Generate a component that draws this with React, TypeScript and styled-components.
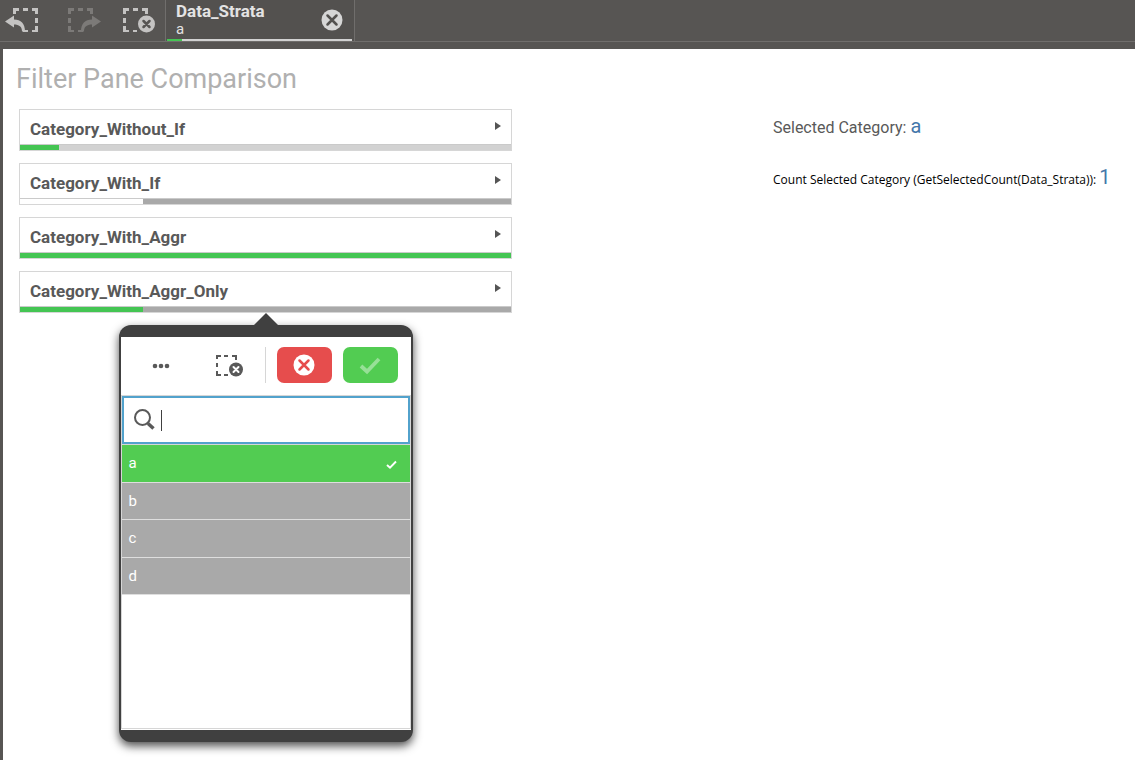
import React from 'react';
import styled, { createGlobalStyle } from 'styled-components';

const GlobalStyle = createGlobalStyle`
  *, *::before, *::after { box-sizing: border-box; }
  body {
    margin: 0;
    background: #575553;
    font-family: Roboto, "Open Sans", "Liberation Sans", sans-serif;
    color: #595959;
  }
  button { font: inherit; border: 0; padding: 0; background: none; cursor: pointer; }
  svg { display: block; }
`;

const Page = styled.div`
  display: flex;
  flex-direction: column;
  min-height: 100vh;
  background: #575553;
`;

const SelectionBar = styled.header`
  display: flex;
  height: 42px;
  margin-bottom: 7px;
  border-bottom: 1px solid #706e6c;
`;

const Tools = styled.nav`
  display: flex;
  align-items: center;
  gap: 20px;
  padding: 0 6px 0 5px;
`;

const ToolButton = styled.button<{ $dim?: boolean }>`
  color: ${(p) => (p.$dim ? '#7c7a78' : '#c4c3c2')};
`;

const Selection = styled.section`
  display: flex;
  flex-direction: column;
  justify-content: space-between;
  width: 190px;
  padding: 0 2px 0 1px;
  border-left: 1px solid #706e6c;
  border-right: 1px solid #706e6c;
  background: #53514f;
`;

const SelectionBody = styled.div`
  display: flex;
  align-items: center;
  justify-content: space-between;
  height: 39px;
  padding: 0 9px;
  color: #e3e3e3;
`;

const SelectionName = styled.div`
  font-size: 17px;
  line-height: 18px;
  font-weight: 700;
`;

const SelectionValue = styled.div`
  font-size: 15px;
  line-height: 18px;
`;

const Sheet = styled.main`
  flex: 1;
  margin-left: 3px;
  padding: 12px 16px 16px;
  background: #fff;
`;

const Title = styled.h1`
  margin: 0 0 12px -3px;
  font-size: 27px;
  line-height: 36px;
  font-weight: 400;
  color: #b0b0b0;
`;

const Columns = styled.div`
  display: grid;
  grid-template-columns: minmax(0, 493fr) minmax(0, 346fr);
  column-gap: 261px;
`;

const Filters = styled.div`
  display: flex;
  flex-direction: column;
  gap: 12px;
`;

const FilterSlot = styled.div`
  position: relative;
`;

const FilterButton = styled.button`
  display: flex;
  flex-direction: column;
  width: 100%;
  height: 42px;
  border: 1px solid #d6d6d6;
  background: #fff;
  text-align: left;
`;

const FilterLabel = styled.span`
  display: flex;
  flex: 1;
  align-items: center;
  justify-content: space-between;
  width: 100%;
  padding: 3px 10px 0 10px;
  font-size: 17px;
  line-height: 20px;
  font-weight: 700;
  color: #595959;

  svg { margin-bottom: 5px; }
`;

const StateBar = styled.span<{ $rule?: boolean }>`
  display: flex;
  width: 100%;
  height: ${(p) => (p.$rule ? 6 : 2)}px;
  border-top: ${(p) => (p.$rule ? '1px solid #cacaca' : '0')};
`;

const StatePart = styled.span<{ $share: number; $color: string }>`
  flex: ${(p) => p.$share} 1 0;
  background: ${(p) => p.$color};
`;

const Popover = styled.section`
  position: absolute;
  z-index: 2;
  top: 54px;
  left: 50%;
  width: 294px;
  transform: translateX(-50%);
  padding: 12px 2px;
  border-radius: 12px;
  background: #404040;
  box-shadow: 0 4px 10px rgba(0, 0, 0, 0.7);
`;

const Pointer = styled.svg`
  position: absolute;
  top: -12px;
  left: 50%;
  transform: translateX(-50%);
  fill: #404040;
`;

const PopoverBody = styled.div`
  padding-bottom: 1px;
  background: #fff;
`;

const ListTools = styled.div`
  display: flex;
  align-items: center;
  height: 58px;
  padding: 0 13px 0 31px;
  color: #595959;
`;

const ListTool = styled.button`
  margin-right: 46px;
  color: inherit;

  & + & { margin-right: 21px; }
`;

const ActionButton = styled.button<{ $color: string }>`
  display: flex;
  align-items: center;
  justify-content: center;
  width: 55px;
  height: 36px;
  margin: 0 0 2px 11px;
  border-radius: 7px;
  background: ${(p) => p.$color};
`;

const Separator = styled.span`
  width: 1px;
  height: 36px;
  margin-bottom: 2px;
  background: #d6d6d6;
`;

const ListFrame = styled.div`
  display: flex;
  flex-direction: column;
  height: 334px;
  border: 1px solid #d6d6d6;
`;

const SearchBox = styled.label`
  display: flex;
  align-items: center;
  height: 48px;
  padding-left: 10px;
  border: 2px solid #52a2cc;
  color: #595959;
`;

const Caret = styled.span`
  width: 1px;
  height: 21px;
  margin-left: 6px;
  background: #404040;
`;

const SearchInput = styled.input`
  flex: 1;
  min-width: 0;
  height: 28px;
  padding: 0 4px;
  border: 0;
  outline: 0;
  background: transparent;
  font: inherit;
`;

const ValueList = styled.ul`
  display: grid;
  grid-auto-rows: 1fr;
  height: 151px;
  margin: 0;
  padding: 0;
  list-style: none;
  border-top: 1px solid #d6d6d6;
`;

const ValueRow = styled.button<{ $selected?: boolean }>`
  display: flex;
  align-items: center;
  justify-content: space-between;
  width: 100%;
  height: 100%;
  padding: 0 13px 0 7px;
  border-bottom: 1px solid #dedede;
  background: ${(p) => (p.$selected ? '#52cc52' : '#a9a9a9')};
  color: #fff;
  font-size: 15px;
  line-height: 20px;

  svg { margin-top: 2px; }
`;

const Facts = styled.div`
  white-space: nowrap;
`;

const Fact = styled.p<{ $small?: boolean }>`
  margin: 0;
  padding-top: ${(p) => (p.$small ? 21 : 3)}px;
  font-family: ${(p) => (p.$small ? '"Open Sans", Roboto, sans-serif' : 'inherit')};
  font-size: ${(p) => (p.$small ? 12 : 16)}px;
  line-height: 28px;
  color: ${(p) => (p.$small ? '#000' : '#595959')};
`;

const FactValue = styled.span`
  font-family: Roboto, sans-serif;
  font-size: 20px;
  color: #4477aa;
`;

/* Dashed selection square, 25 units wide, shared by the toolbar icons */
const DashedSquare = ({ x }: { x: number }) => (
  <g transform={`translate(${x} 1)`} fill="currentColor">
    <path d="M0 0h6v3h-3v3h-3zM10 0h5v3h-5zM19 0h6v6h-3v-3h-3z" />
  </g>
);

const StepBackShape = () => (
  <>
    <DashedSquare x={8} />
    <g fill="currentColor">
      <path d="M30 11h3v5h-3zM33 19v6h-6v-2h3v-4zM18 23h5v2h-5z" />
      <path d="M0 14.500l9-6v4c7 0 11 4 11 12h-3c0-5-3-7-8-7v3z" />
    </g>
  </>
);

const StepBackIcon = () => (
  <svg width="38" height="27" viewBox="0 0 38 27" aria-hidden="true">
    <StepBackShape />
  </svg>
);

const StepForwardIcon = () => (
  <svg width="38" height="27" viewBox="0 0 38 27" aria-hidden="true">
    <g transform="translate(38 0) scale(-1 1)">
      <StepBackShape />
    </g>
  </svg>
);

const ClearAllIcon = () => (
  <svg width="38" height="27" viewBox="0 0 38 27" aria-hidden="true">
    <DashedSquare x={2} />
    <path d="M2 11h3v5h-3zM2 19h3v4h3v2h-6zM12 23h4v2h-4z" fill="currentColor" />
    <circle cx="25.500" cy="17" r="8.500" fill="currentColor" />
    <path d="M22.500 14l6 6M28.500 14l-6 6" stroke="#575553" strokeWidth="2.500" strokeLinecap="round" />
  </svg>
);

const ClearListIcon = () => (
  <svg width="28" height="22" viewBox="0 0 28 22" aria-hidden="true">
    <path
      d="M0 0h5v2h-3v2h-2zM8 0h4v2h-4zM16 0h5v5h-2v-3h-3zM0 8h2v4h-2zM0 16h2v3h3v2h-5zM8 19h4v2h-4z"
      fill="currentColor"
    />
    <circle cx="20" cy="14.500" r="7" fill="currentColor" />
    <path d="M17.500 12l5 5M22.500 12l-5 5" stroke="#fff" strokeWidth="2" strokeLinecap="round" />
  </svg>
);

const RoundCloseIcon = ({ disc, cross }: { disc: string; cross: string }) => (
  <svg width="22" height="22" viewBox="0 0 22 22" aria-hidden="true">
    <circle cx="11" cy="11" r="10.500" fill={disc} />
    <path d="M6.500 6.500l9 9M15.500 6.500l-9 9" stroke={cross} strokeWidth="2.500" strokeLinecap="round" />
  </svg>
);

const DotsIcon = () => (
  <svg width="18" height="6" viewBox="0 0 18 6" fill="currentColor" aria-hidden="true">
    <circle cx="3" cy="3" r="2.300" />
    <circle cx="9" cy="3" r="2.300" />
    <circle cx="15" cy="3" r="2.300" />
  </svg>
);

const SearchIcon = () => (
  <svg width="21" height="22" viewBox="0 0 21 22" fill="none" stroke="currentColor" aria-hidden="true">
    <circle cx="8.500" cy="8.500" r="7.500" strokeWidth="2" />
    <path d="M14 14.500l5.500 5" strokeWidth="3.500" />
  </svg>
);

const CheckIcon = ({ size, color }: { size: number; color: string }) => (
  <svg width={size} height={size} viewBox="0 0 22 22" fill="none" aria-hidden="true">
    <path d="M2 12l6 5.500L20 5" stroke={color} strokeWidth="3.800" />
  </svg>
);

const ArrowIcon = () => (
  <svg width="6" height="8" viewBox="0 0 6 8" aria-hidden="true">
    <path d="M0 0l6 4-6 4z" fill="#555" />
  </svg>
);

const GREEN = '#44c553';
const GREY = '#a9a9a9';

type Part = { share: number; color: string };

const filters: { name: string; parts: Part[] }[] = [
  { name: 'Category_Without_If', parts: [{ share: 8, color: GREEN }, { share: 92, color: '#d2d2d2' }] },
  { name: 'Category_With_If', parts: [{ share: 1, color: '#fff' }, { share: 3, color: GREY }] },
  { name: 'Category_With_Aggr', parts: [{ share: 1, color: GREEN }] },
  { name: 'Category_With_Aggr_Only', parts: [{ share: 1, color: GREEN }, { share: 3, color: GREY }] },
];

const values = ['a', 'b', 'c', 'd'];

const StateBarOf = ({ parts, rule }: { parts: Part[]; rule?: boolean }) => (
  <StateBar $rule={rule}>
    {parts.map((part) => (
      <StatePart key={part.color} $share={part.share} $color={part.color} />
    ))}
  </StateBar>
);

const ListPopover = () => (
  <Popover aria-label="Category_With_Aggr_Only">
    <Pointer width="24" height="13" viewBox="0 0 24 13" aria-hidden="true">
      <path d="M0 12L12 0l12 12v1H0z" />
    </Pointer>
    <PopoverBody>
      <ListTools>
        <ListTool aria-label="More"><DotsIcon /></ListTool>
        <ListTool aria-label="Clear selection"><ClearListIcon /></ListTool>
        <Separator />
        <ActionButton $color="#e64d4d" aria-label="Cancel selection">
          <RoundCloseIcon disc="#fff" cross="#e64d4d" />
        </ActionButton>
        <ActionButton $color="#52cc52" aria-label="Confirm selection">
          <CheckIcon size={22} color="#97e097" />
        </ActionButton>
      </ListTools>
      <ListFrame>
        <SearchBox>
          <SearchIcon />
          <Caret />
          <SearchInput type="text" aria-label="Search" />
        </SearchBox>
        <ValueList>
          {values.map((value, i) => (
            <li key={value}>
              <ValueRow $selected={i === 0}>
                {value}
                {i === 0 && <CheckIcon size={11} color="#fff" />}
              </ValueRow>
            </li>
          ))}
        </ValueList>
      </ListFrame>
    </PopoverBody>
  </Popover>
);

export default function App() {
  return (
    <Page>
      <GlobalStyle />
      <SelectionBar>
        <Tools>
          <ToolButton aria-label="Step back"><StepBackIcon /></ToolButton>
          <ToolButton aria-label="Step forward" $dim><StepForwardIcon /></ToolButton>
          <ToolButton aria-label="Clear all selections"><ClearAllIcon /></ToolButton>
        </Tools>
        <Selection>
          <SelectionBody>
            <div>
              <SelectionName>Data_Strata</SelectionName>
              <SelectionValue>a</SelectionValue>
            </div>
            <button aria-label="Clear Data_Strata">
              <RoundCloseIcon disc="#d6d6d6" cross="#53514f" />
            </button>
          </SelectionBody>
          <StateBarOf parts={[{ share: 8, color: GREEN }, { share: 92, color: '#d2d2d2' }]} />
        </Selection>
      </SelectionBar>
      <Sheet>
        <Title>Filter Pane Comparison</Title>
        <Columns>
          <Filters>
            {filters.map((filter, i) => (
              <FilterSlot key={filter.name}>
                <FilterButton>
                  <FilterLabel>
                    {filter.name}
                    <ArrowIcon />
                  </FilterLabel>
                  <StateBarOf parts={filter.parts} rule />
                </FilterButton>
                {i === filters.length - 1 && <ListPopover />}
              </FilterSlot>
            ))}
          </Filters>
          <Facts>
            <Fact>Selected Category: <FactValue>a</FactValue></Fact>
            <Fact $small>
              Count Selected Category (GetSelectedCount(Data_Strata)): <FactValue>1</FactValue>
            </Fact>
          </Facts>
        </Columns>
      </Sheet>
    </Page>
  );
}
